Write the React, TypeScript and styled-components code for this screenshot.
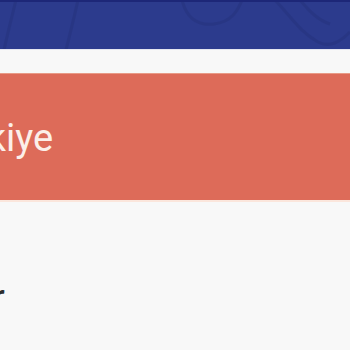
import React from "react";
import styled, { createGlobalStyle } from "styled-components";

const GlobalStyle = createGlobalStyle`
  html, body {
    margin: 0;
    padding: 0;
    background: #f8f8f8;
    overflow: hidden;
  }
  body {
    font-family: "Roboto", "Lato", sans-serif;
  }
`;

const Page = styled.div`
  width: 350px;
  height: 350px;
  display: flex;
  flex-direction: column;
  background: #f8f8f8;
  overflow: hidden;
`;

const Header = styled.header`
  position: relative;
  height: 49px;
  flex: none;
  background: #2c3b8d;
  border-top: 2px solid #1d2778;
  box-sizing: border-box;
  overflow: hidden;
`;

const Pattern = styled.svg`
  position: absolute;
  inset: 0;
  width: 100%;
  height: 100%;
`;

const Spacer = styled.div`
  height: 24px;
  flex: none;
  background: #f8f8f8;
  border-top: 1px solid #e4e6f0;
  box-sizing: border-box;
`;

const Banner = styled.section`
  height: 129px;
  flex: none;
  display: flex;
  align-items: center;
  background: #dd6b59;
  border-top: 1px solid #e89a86;
  border-bottom: 2px solid #fbe6dc;
  box-sizing: border-box;
  overflow: hidden;
`;

const BannerTitle = styled.h1`
  margin: 0 0 0 -68px;
  padding-top: 2px;
  font-family: "Roboto", "Lato", sans-serif;
  font-weight: 400;
  font-size: 38px;
  color: #fcefe9;
  white-space: nowrap;
`;

const Content = styled.main`
  flex: 1;
  padding-top: 74px;
  overflow: hidden;
`;

const SectionTitle = styled.h2`
  margin: 0 0 0 -163px;
  font-family: "Lato", "Open Sans", sans-serif;
  font-weight: 700;
  font-size: 30px;
  color: #2e2e2e;
  white-space: nowrap;
`;

export default function App() {
  return (
    <>
      <GlobalStyle />
      <Page>
        <Header>
          <Pattern viewBox="0 0 350 47" preserveAspectRatio="none">
            <g fill="none" stroke="#27347f" strokeWidth="3" opacity="0.6">
              <path d="M16 -2 C12 14 8 30 4 48" />
              <path d="M78 -2 C74 16 70 32 66 48" />
              <path d="M182 -2 C186 14 196 24 214 22 C232 20 238 8 242 -2" />
              <path d="M275 -2 C292 16 300 30 318 40 C330 46 340 40 350 30" />
              <path d="M300 -2 C310 10 318 18 330 22" />
            </g>
          </Pattern>
        </Header>
        <Spacer />
        <Banner>
          <BannerTitle>Türkiye</BannerTitle>
        </Banner>
        <Content>
          <SectionTitle>Hakkımızdar</SectionTitle>
        </Content>
      </Page>
    </>
  );
}
